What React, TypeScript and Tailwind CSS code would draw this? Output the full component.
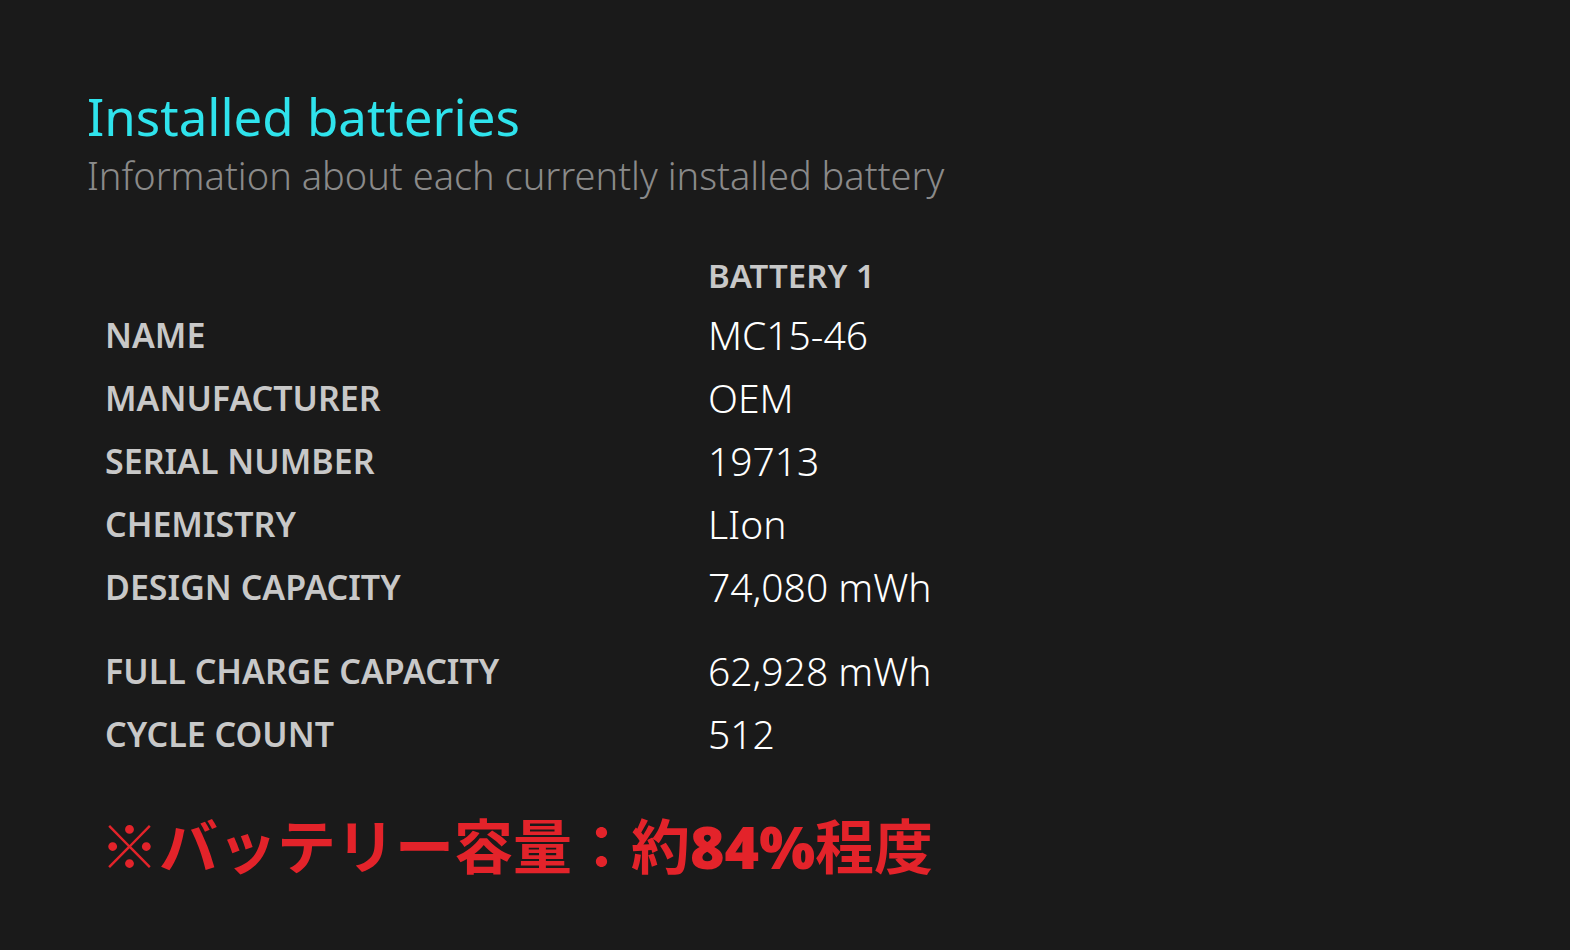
const rows: { label: string; value: string; gap?: boolean }[] = [
  { label: 'NAME', value: 'MC15-46' },
  { label: 'MANUFACTURER', value: 'OEM' },
  { label: 'SERIAL NUMBER', value: '19713' },
  { label: 'CHEMISTRY', value: 'LIon' },
  { label: 'DESIGN CAPACITY', value: '74,080 mWh' },
  { label: 'FULL CHARGE CAPACITY', value: '62,928 mWh', gap: true },
  { label: 'CYCLE COUNT', value: '512' },
];

export default function App() {
  return (
    <div
      className="h-[950px] w-[1570px] overflow-hidden bg-[#1a1a1a] pl-[87px] pt-[86px]"
      style={{ fontFamily: '"Noto Sans", "Open Sans", sans-serif' }}
    >
      <h1 className="text-[51px] leading-[60px] font-normal text-[#2fe3ec]">Installed batteries</h1>
      <p className="text-[38px] leading-[58px] font-light text-[#8a8a8a]">
        Information about each currently installed battery
      </p>

      <div className="mt-[44px] pl-[18px]">
        <div className="flex h-[56px] items-center">
          <div className="w-[603px]" />
          <div className="text-[33px] font-semibold text-[#c8c8c8]">BATTERY 1</div>
        </div>
        {rows.map((r) => (
          <div key={r.label} className={r.gap ? 'mt-[21px] flex h-[63px] items-center' : 'flex h-[63px] items-center'}>
            <div className="w-[603px] text-[34px] font-semibold text-[#c8c8c8]">{r.label}</div>
            <div className="text-[39px] font-light text-white">{r.value}</div>
          </div>
        ))}

        <div
          className="mt-[34px] -ml-[5px] text-[59px] font-bold text-[#e3232a]"
          style={{ fontFamily: '"Noto Sans CJK JP", "Noto Sans", sans-serif' }}
        >
          ※バッテリー容量：約<span style={{ fontFamily: '"Noto Sans", sans-serif' }} className="font-black">84%</span>程度
        </div>
      </div>
    </div>
  );
}
